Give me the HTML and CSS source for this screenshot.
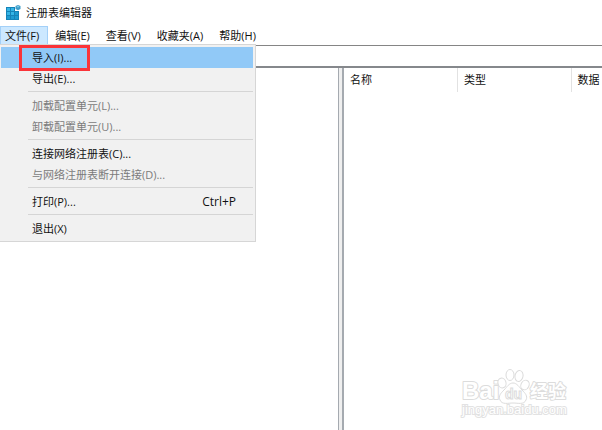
FILE: index.html
```html
<!DOCTYPE html>
<html lang="zh-CN">
<head>
<meta charset="utf-8">
<title>注册表编辑器</title>
<link rel="stylesheet" href="styles.css">
</head>
<body>
<div class="window">
  <header class="titlebar">
    <svg class="app-icon" viewBox="0 0 16 16" width="16" height="16" aria-hidden="true">
      <path d="M1 2h9v4h4v9H1z" fill="#1583b8"/>
      <path d="M2 3h3v3H2zM6 3h3v3H6zM2 7h3v3H2zM6 7h3v3H6z" fill="#35b5e6"/>
      <path d="M10 7h3v3h-3zM2 11h3v3H2zM6 11h3v3H6zM10 11h3v3h-3z" fill="#1e9bd1"/>
      <path d="M13 0l2.500 1v3L13 5.300 10.500 4V1z" fill="#3d9cc8"/>
      <path d="M13 1l1.500.8-1.500.8-1.500-.8z" fill="#8bd4f0"/>
    </svg>
    <h1 class="title">注册表编辑器</h1>
  </header>

  <nav class="menubar">
    <div class="menu-root">
      <button class="menu-button open" aria-haspopup="true" aria-expanded="true">文件(F)</button>
      <div class="menu" role="menu">
        <button class="item active" role="menuitem">导入(I)...</button>
        <button class="item" role="menuitem">导出(E)...</button>
        <hr class="separator">
        <button class="item" role="menuitem" disabled>加载配置单元(L)...</button>
        <button class="item" role="menuitem" disabled>卸载配置单元(U)...</button>
        <hr class="separator">
        <button class="item" role="menuitem">连接网络注册表(C)...</button>
        <button class="item" role="menuitem" disabled>与网络注册表断开连接(D)...</button>
        <hr class="separator">
        <button class="item" role="menuitem"><span>打印(P)...</span><span class="shortcut">Ctrl+P</span></button>
        <hr class="separator">
        <button class="item" role="menuitem">退出(X)</button>
        <div class="callout"></div>
      </div>
    </div>
    <button class="menu-button">编辑(E)</button>
    <button class="menu-button">查看(V)</button>
    <button class="menu-button">收藏夹(A)</button>
    <button class="menu-button">帮助(H)</button>
  </nav>

  <input class="address" type="text" aria-label="地址">

  <main class="panes">
    <section class="tree"></section>
    <div class="splitter"></div>
    <section class="list">
      <table class="values">
        <thead>
          <tr><th class="name">名称</th><th class="type">类型</th><th>数据</th></tr>
        </thead>
      </table>
    </section>
  </main>

  <svg class="watermark" viewBox="0 0 112 56" width="112" height="56">
    <g class="outline">
      <text class="brand" x="3" y="36">Bai</text>
      <text class="brand-cn" x="71" y="35">经验</text>
      <ellipse cx="43" cy="20" rx="4" ry="5" transform="rotate(-15 43 20)"/>
      <ellipse cx="51" cy="12" rx="4" ry="5.500"/>
      <ellipse cx="60" cy="13" rx="4" ry="5.500" transform="rotate(12 60 13)"/>
      <ellipse cx="66" cy="22" rx="4" ry="5" transform="rotate(25 66 22)"/>
      <path d="M54 20c4 0 6 4 9 7s6 6 4 10c-2 5-8 3-13 3s-11 2-13-3c-2-4 1-7 4-10s5-7 9-7z"/>
      <text class="brand-du" x="46" y="36">du</text>
      <text class="site" x="3" y="51">jingyan.baidu.com</text>
    </g>
  </svg>
</div>
</body>
</html>
```
FILE: styles.css
```css
* {
  box-sizing: border-box;
}

body {
  margin: 0;
  background: #fff;
  color: #111;
  font: 11px/16px "Open Sans", "Noto Sans CJK SC", sans-serif;
}

button,
input {
  font: inherit;
  color: inherit;
}

.window {
  position: relative;
  display: flex;
  flex-direction: column;
  min-height: 100vh;
  overflow: hidden;
}

.titlebar {
  display: flex;
  align-items: center;
  gap: 5px;
  height: 26px;
  padding: 0 5px;
}

.title {
  margin: 0;
  font-size: 11px;
  font-weight: 400;
}

.menubar {
  display: flex;
  gap: 2px;
  height: 19px;
}

.menu-root {
  position: relative;
  display: flex;
}

.menu-button {
  padding: 0 8px 0 4px;
  border: 1px solid transparent;
  background: none;
  line-height: 17px;
  white-space: nowrap;
}

.menu-button.open {
  border-color: #a3d0f8;
  background: #cce8ff;
}

.menu {
  position: absolute;
  z-index: 2;
  top: 18px;
  left: 0;
  width: 256px;
  padding: 2px 2px 2px 1px;
  border: 1px solid #d6d6d6;
  border-left: 0;
  background: #f1f1f1;
}

.item {
  display: flex;
  justify-content: space-between;
  align-items: center;
  width: 100%;
  height: 21px;
  padding: 0 17px 0 31px;
  border: 0;
  background: none;
  text-align: left;
  white-space: nowrap;
}

.item.active {
  background: #91c9f7;
}

.item:disabled {
  color: #7b7b7b;
}

.shortcut {
  font-size: 12px;
}

.separator {
  height: 1px;
  margin: 2px 0 3px 27px;
  border: 0;
  background: #d5d5d5;
}

.callout {
  position: absolute;
  top: 0;
  left: 19px;
  width: 71px;
  height: 26px;
  border: 3px solid #fa3439;
}

.address {
  width: 100%;
  height: 23px;
  padding: 0 4px;
  border: 0;
  border-top: 1px solid #858585;
  border-bottom: 2px solid #85888c;
  background: #fff;
}

.panes {
  display: flex;
  flex: 1;
}

.tree {
  flex: 338 1 0;
}

.splitter {
  width: 6px;
  border: solid #a5aab0;
  border-width: 0 2px 0 1px;
  background: #efefef;
}

.list {
  flex: 258 1 0;
  min-width: 0;
  overflow: hidden;
}

.values {
  width: 100%;
  border-collapse: collapse;
  table-layout: fixed;
}

.values th {
  height: 24px;
  padding: 0 0 0 6px;
  font-weight: 400;
  text-align: left;
  white-space: nowrap;
}

.values .name,
.values .type {
  width: 44%;
  border-right: 1px solid #e2e2e2;
}

.watermark {
  position: absolute;
  right: 31px;
  bottom: 11px;
}

.outline {
  fill: #fff;
  stroke: #dcdcdc;
  stroke-width: 1;
  font-family: "Liberation Sans", "Noto Sans CJK SC", sans-serif;
  font-weight: 700;
}

.brand,
.brand-cn {
  stroke-width: 2;
  stroke-linejoin: round;
  paint-order: stroke;
}

.brand {
  font-size: 24px;
}

.brand-cn {
  font-size: 18px;
}

.brand-du {
  font-size: 14px;
}

.site {
  font-size: 13px;
  font-weight: 400;
  stroke: #e2e2e2;
  stroke-width: 2;
  paint-order: stroke;
}
```
